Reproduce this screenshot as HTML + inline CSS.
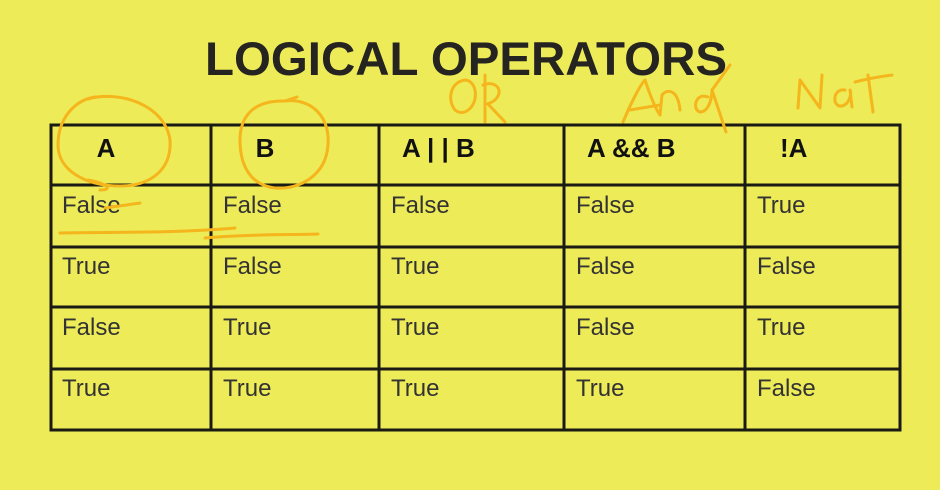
<!DOCTYPE html>
<html><head><meta charset="utf-8"><style>
html,body{margin:0;padding:0;background:#eeeb58;}
svg{display:block}
</style></head><body>
<svg width="940" height="490" viewBox="0 0 940 490" xmlns="http://www.w3.org/2000/svg">
<rect width="940" height="490" fill="#eeeb58"/>
<text x="466" y="75" text-anchor="middle" font-family="Liberation Sans, sans-serif" font-weight="bold" font-size="47" fill="#262420" textLength="522" lengthAdjust="spacingAndGlyphs">LOGICAL OPERATORS</text>
<g stroke="#1a1a14" stroke-width="3" fill="none">
<rect x="51" y="125" width="849" height="305"/>
<line x1="211" y1="125" x2="211" y2="430"/>
<line x1="379" y1="125" x2="379" y2="430"/>
<line x1="564" y1="125" x2="564" y2="430"/>
<line x1="745" y1="125" x2="745" y2="430"/>
<line x1="51" y1="185" x2="900" y2="185"/>
<line x1="51" y1="247" x2="900" y2="247"/>
<line x1="51" y1="307" x2="900" y2="307"/>
<line x1="51" y1="369" x2="900" y2="369"/>
</g>
<g font-family="Liberation Sans, sans-serif" font-weight="bold" font-size="26" fill="#111">
<text x="106" y="157" text-anchor="middle">A</text>
<text x="265" y="157" text-anchor="middle">B</text>
<text x="402" y="157">A | | B</text>
<text x="587" y="157">A &amp;&amp; B</text>
<text x="780" y="157">!A</text>
</g>
<g font-family="Liberation Sans, sans-serif" font-size="24" fill="#333">
<text x="62" y="213">False</text><text x="223" y="213">False</text><text x="391" y="213">False</text><text x="576" y="213">False</text><text x="757" y="213">True</text>
<text x="62" y="274">True</text><text x="223" y="274">False</text><text x="391" y="274">True</text><text x="576" y="274">False</text><text x="757" y="274">False</text>
<text x="62" y="335">False</text><text x="223" y="335">True</text><text x="391" y="335">True</text><text x="576" y="335">False</text><text x="757" y="335">True</text>
<text x="62" y="396">True</text><text x="223" y="396">True</text><text x="391" y="396">True</text><text x="576" y="396">True</text><text x="757" y="396">False</text>
</g>
<g stroke="#f5b51c" stroke-width="3" fill="none" stroke-linecap="round" stroke-linejoin="round">
<path d="M88 99 C120 90 165 105 170 140 C172 170 150 186 120 186 C85 186 58 170 58 145 C58 118 75 100 95 97"/>
<path d="M88 180 C105 183 115 190 100 190"/>
<path d="M105 208 L140 203"/>
<path d="M60 233 C120 232 180 233 235 228"/>
<path d="M205 238 C250 234 290 235 318 234"/>
<path d="M285 101 C310 98 330 115 328 145 C326 175 300 190 275 188 C250 185 240 165 240 140 C240 115 255 100 285 101 M285 101 L297 97"/>
<path d="M465 80 C450 82 447 100 455 110 C465 118 478 105 475 90 C473 82 468 80 465 80"/>
<path d="M485 75 L485 122 M483 85 C495 80 505 90 495 100 C490 104 486 104 488 104 L505 122"/>
<path d="M623 122 C630 105 640 85 645 80 C650 95 655 108 660 115 M630 110 L660 105"/>
<path d="M660 115 L662 95 C668 88 678 90 680 110"/>
<path d="M708 97 C695 92 692 110 700 112 C708 112 712 100 712 90 L730 65 M712 90 L726 132"/>
<path d="M798 108 L800 80 L820 108 L822 75"/>
<path d="M845 90 C832 88 832 108 842 106 C850 104 852 92 850 90 L852 107"/>
<path d="M868 75 L873 112 M855 82 C870 78 885 76 892 75"/>
</g>
</svg>
</body></html>
